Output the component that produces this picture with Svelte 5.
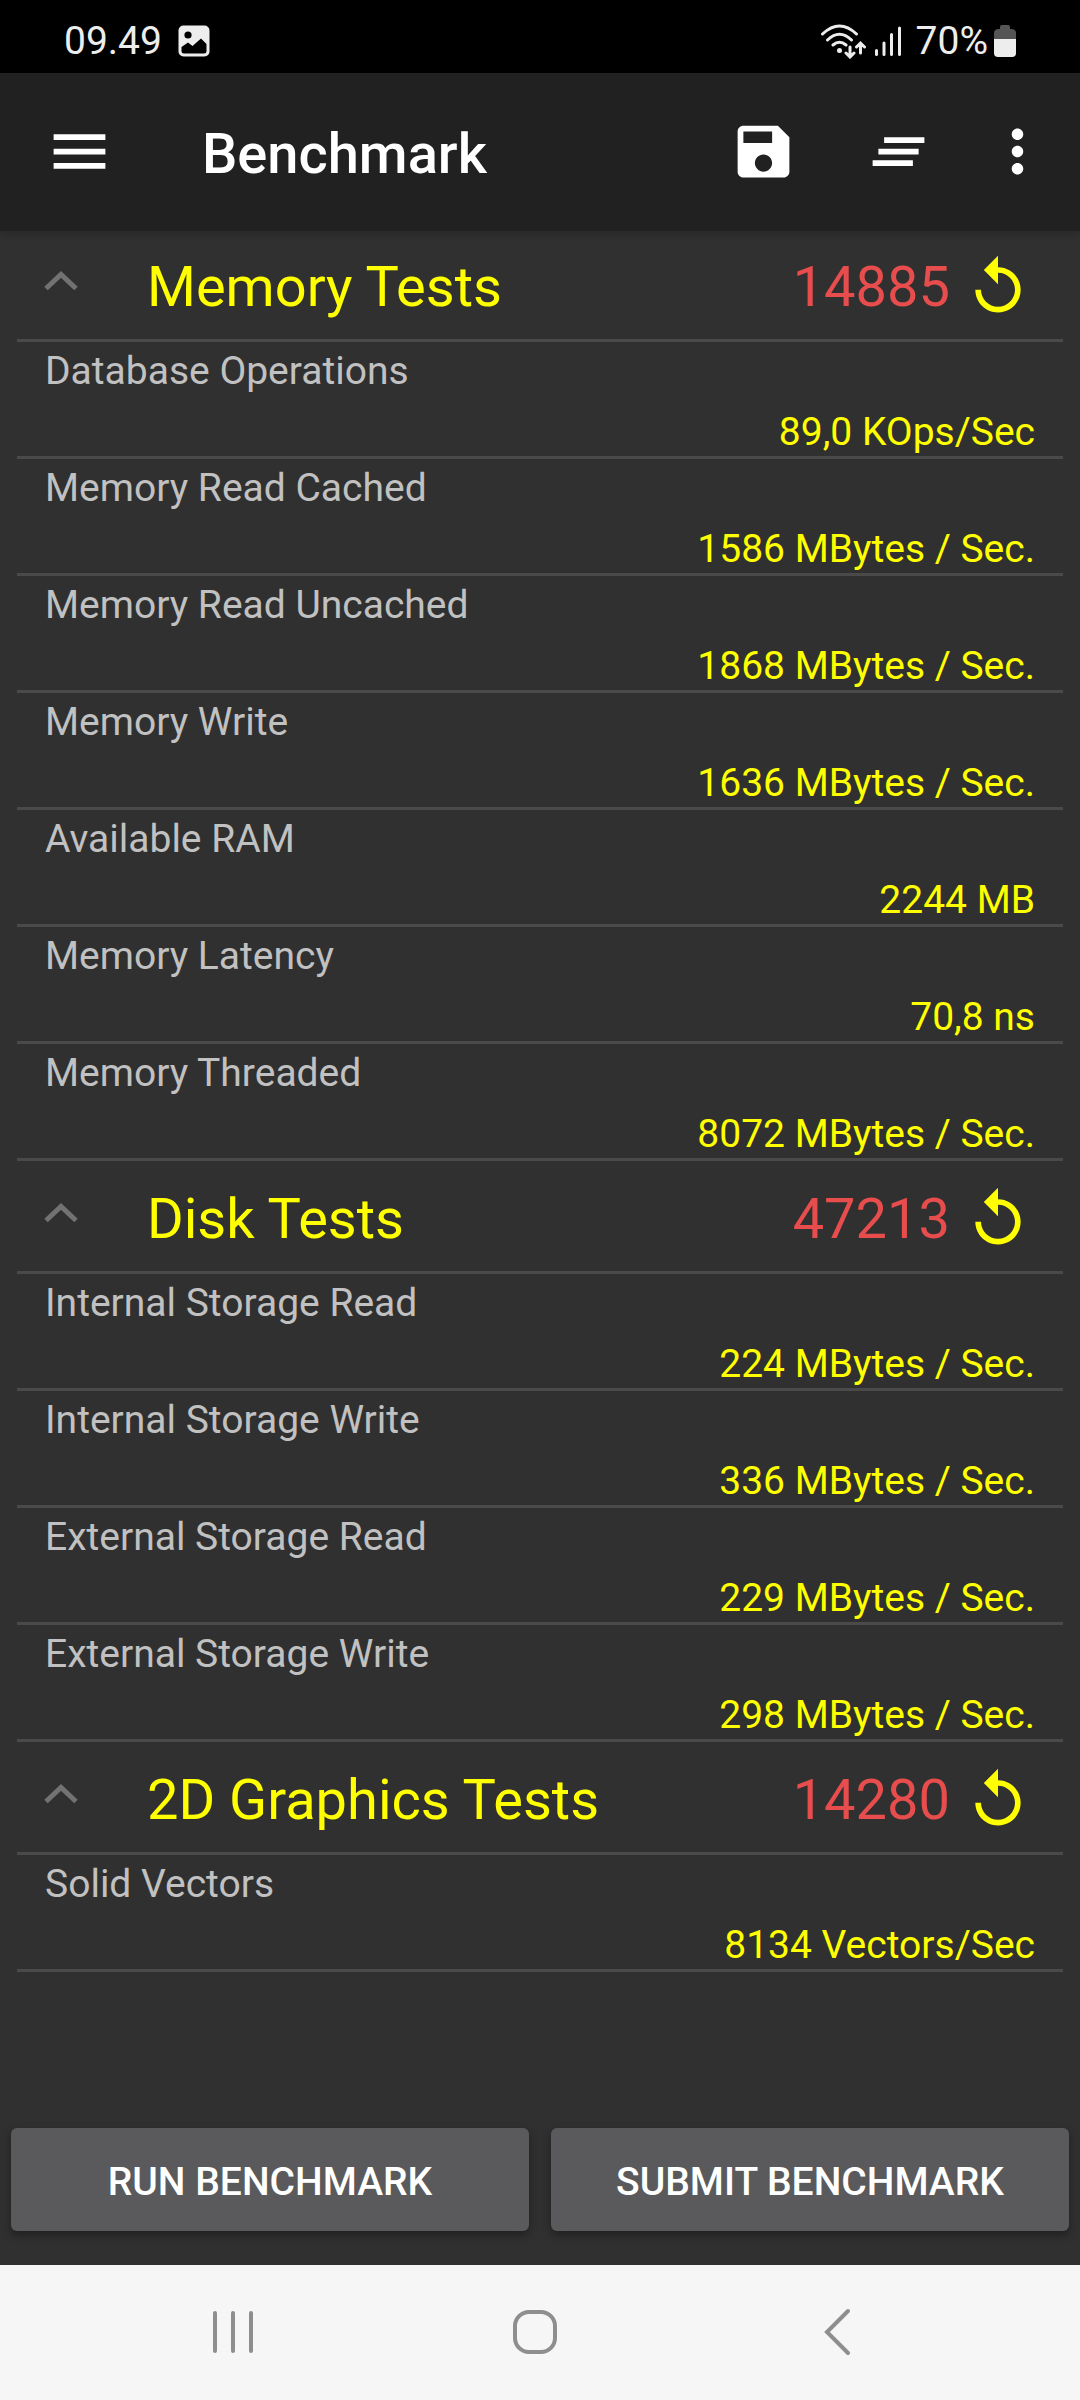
<script>
  let sections = $state([
    {
      title: 'Memory Tests',
      score: 14885,
      open: true,
      results: [
        { name: 'Database Operations', value: '89,0 KOps/Sec' },
        { name: 'Memory Read Cached', value: '1586 MBytes / Sec.' },
        { name: 'Memory Read Uncached', value: '1868 MBytes / Sec.' },
        { name: 'Memory Write', value: '1636 MBytes / Sec.' },
        { name: 'Available RAM', value: '2244 MB' },
        { name: 'Memory Latency', value: '70,8 ns' },
        { name: 'Memory Threaded', value: '8072 MBytes / Sec.' }
      ]
    },
    {
      title: 'Disk Tests',
      score: 47213,
      open: true,
      results: [
        { name: 'Internal Storage Read', value: '224 MBytes / Sec.' },
        { name: 'Internal Storage Write', value: '336 MBytes / Sec.' },
        { name: 'External Storage Read', value: '229 MBytes / Sec.' },
        { name: 'External Storage Write', value: '298 MBytes / Sec.' }
      ]
    },
    {
      title: '2D Graphics Tests',
      score: 14280,
      open: true,
      results: [{ name: 'Solid Vectors', value: '8134 Vectors/Sec' }]
    }
  ]);
</script>

<div class="screen">
  <div class="status-bar">
    <span>09.49</span>
    <svg class="photo" width="32" height="32" viewBox="0 0 32 32">
      <rect x="0.5" y="0.5" width="31" height="31" rx="5" fill="#ededed" />
      <circle cx="10" cy="10" r="3.6" fill="#000" />
      <path d="M3.5 22L10 17.5L14.500 21L23 13.500L28.500 19V26Q28.500 28.500 26 28.500H6Q3.500 28.500 3.500 26Z" fill="#000" />
    </svg>
    <span class="spacer"></span>
    <svg width="46" height="36" viewBox="0 0 46 36" fill="none" stroke="#ededed" stroke-width="3" stroke-linecap="round">
      <path d="M2.5 11Q19.500 -5 36.500 11M7.500 17Q19.500 5.500 31.500 17M13 22Q19.500 16.500 26 22" />
      <circle cx="19.5" cy="27.5" r="2.5" fill="#ededed" stroke="none" />
      <path d="M30 24V33M26 30L30 34L34 30M40.500 30V21M36.500 24L40.500 20L44.500 24" />
    </svg>
    <svg class="signal" width="28" height="32" viewBox="0 0 28 32" stroke="#ededed" stroke-width="3" stroke-linecap="round">
      <path d="M2.5 25.500V29.500M10 18V29.500M17.500 9.500V29.500M25.500 3V29.500" />
    </svg>
    <span>70%</span>
    <svg class="battery" width="22" height="32" viewBox="0 0 22 32">
      <path d="M6 4V2Q6 0 8 0H14Q16 0 16 2V4H17Q22 4 22 8V14H0V8Q0 4 5 4Z" fill="#555" />
      <path d="M0 14H22V28Q22 32 18 32H4Q0 32 0 28Z" fill="#ededed" />
    </svg>
  </div>

  <header class="app-bar">
    <button class="icon-button" aria-label="Open menu">
      <svg width="69" height="69" viewBox="0 0 24 24"><path d="M3 18h18v-2H3v2zm0-5h18v-2H3v2zm0-7v2h18V6H3z" /></svg>
    </button>
    <h1>Benchmark</h1>
    <div class="actions">
      <button class="icon-button" aria-label="Save">
        <svg width="69" height="69" viewBox="0 0 24 24"><path d="M17 3H5c-1.110 0-2 .9-2 2v14c0 1.100.89 2 2 2h14c1.100 0 2-.9 2-2V7l-4-4zm-5 16c-1.660 0-3-1.340-3-3s1.340-3 3-3 3 1.340 3 3-1.340 3-3 3zm3-10H5V5h10v4z" /></svg>
      </button>
      <button class="icon-button" aria-label="Clear results">
        <svg width="69" height="69" viewBox="0 0 24 24"><path d="M5 13h14v-2H5v2zm-2 4h14v-2H3v2zM7 7v2h14V7H7z" /></svg>
      </button>
      <button class="icon-button more" aria-label="More options">
        <svg width="69" height="69" viewBox="0 0 24 24"><path d="M12 8c1.100 0 2-.9 2-2s-.9-2-2-2-2 .9-2 2 .9 2 2 2zm0 2c-1.100 0-2 .9-2 2s.9 2 2 2 2-.9 2-2-.9-2-2-2zm0 6c-1.100 0-2 .9-2 2s.9 2 2 2 2-.9 2-2-.9-2-2-2z" /></svg>
      </button>
    </div>
  </header>

  <main>
    {#each sections as section}
      <section>
        <div class="section-header">
          <button class="toggle" aria-expanded={section.open} onclick={() => (section.open = !section.open)}>
            <svg class:closed={!section.open} width="34" height="20" viewBox="0 0 34 20" fill="none">
              <path d="M2 17.5L17 3.500L32 17.500" stroke="#727272" stroke-width="5" />
            </svg>
            <span>{section.title}</span>
          </button>
          <span class="score">{section.score}</span>
          <button class="icon-button" aria-label="Run {section.title} again">
            <svg width="68" height="68" viewBox="0 0 24 24"><path d="M12 5V1L7 6l5 5V7c3.310 0 6 2.690 6 6s-2.690 6-6 6-6-2.690-6-6H4c0 4.420 3.580 8 8 8s8-3.580 8-8-3.580-8-8-8z" /></svg>
          </button>
        </div>
        {#if section.open}
          <dl>
            {#each section.results as result}
              <div class="result">
                <dt>{result.name}</dt>
                <dd>{result.value}</dd>
              </div>
            {/each}
          </dl>
        {/if}
      </section>
    {/each}
  </main>

  <div class="run-bar">
    <button>RUN BENCHMARK</button>
    <button>SUBMIT BENCHMARK</button>
  </div>

  <nav>
    <button aria-label="Recent apps">
      <svg width="48" height="48" viewBox="0 0 48 48"><path d="M6 5V43M24 5V43M42 5V43" /></svg>
    </button>
    <button aria-label="Home">
      <svg width="48" height="48" viewBox="0 0 48 48"><rect x="4" y="4" width="40" height="40" rx="14" /></svg>
    </button>
    <button aria-label="Back">
      <svg width="48" height="48" viewBox="0 0 48 48"><path d="M35 3L14 24L35 45" /></svg>
    </button>
  </nav>
</div>

<style>
  :global(body) {
    background: #303030;
  }

  .screen {
    display: flex;
    flex-direction: column;
    min-height: 100vh;
    background: #303030;
    color: #fff;
    font-family: Roboto, sans-serif;
    font-size: 39px;
    line-height: 48px;
  }

  button {
    padding: 0;
    border: none;
    background: none;
    color: inherit;
    font: inherit;
    cursor: pointer;
  }

  svg {
    display: block;
    flex-shrink: 0;
  }

  .spacer {
    flex: 1;
  }

  .status-bar {
    display: flex;
    align-items: center;
    height: 73px;
    padding: 8px 64px 0;
    box-sizing: border-box;
    background: #000;
    color: #ededed;
  }

  .photo {
    margin-left: 16px;
  }

  .signal {
    margin: 0 14px 0 8px;
  }

  .battery {
    margin-left: 6px;
  }

  .app-bar {
    position: relative;
    z-index: 1;
    display: flex;
    align-items: center;
    height: 158px;
    padding: 0 28px 2px 45px;
    box-sizing: border-box;
    background: #212121;
    box-shadow: 0 2px 8px rgba(0, 0, 0, 0.2);
  }

  .icon-button {
    display: flex;
    fill: currentColor;
  }

  h1 {
    flex: 1;
    margin: 0 0 0 88px;
    padding-top: 6px;
    font-size: 56px;
    font-weight: 500;
    line-height: 64px;
  }

  .actions {
    display: flex;
    gap: 66px;
  }

  .more {
    margin-left: -16px;
  }

  /* the list starts slightly under the app bar */
  main {
    flex: 1;
    margin-top: -2px;
    padding: 0 17px;
  }

  .section-header {
    display: flex;
    align-items: center;
    height: 104px;
    padding: 6px 31px 0 0;
    border-bottom: 3px solid #4a4a4a;
    color: #ff0;
    font-size: 56px;
    line-height: 64px;
  }

  .toggle {
    display: flex;
    flex: 1;
    align-items: center;
    gap: 69px;
    padding-left: 27px;
    text-align: left;
  }

  .toggle svg {
    margin-bottom: 12px;
  }

  .toggle .closed {
    transform: rotate(180deg);
  }

  .score {
    margin-right: 14px;
    color: #e84d4d;
  }

  dl {
    margin: 0;
  }

  .result {
    padding: 5px 28px 0;
    border-bottom: 3px solid #4a4a4a;
  }

  dt {
    height: 61px;
    color: #c1c1c1;
  }

  dd {
    margin: 0;
    color: #ff0;
    text-align: right;
  }

  .run-bar {
    display: flex;
    gap: 22px;
    padding: 0 11px 34px;
  }

  .run-bar button {
    flex: 1;
    height: 103px;
    padding-top: 4px;
    border-radius: 6px;
    background: #5a5a5c;
    box-shadow: 0 4px 8px rgba(0, 0, 0, 0.35);
    font-weight: 500;
  }

  nav {
    display: flex;
    justify-content: center;
    gap: 254px;
    padding: 43px 10px 44px 0;
    background: #f6f6f6;
  }

  nav svg {
    fill: none;
    stroke: #8e8e8e;
    stroke-width: 4;
    stroke-linecap: round;
  }
</style>
